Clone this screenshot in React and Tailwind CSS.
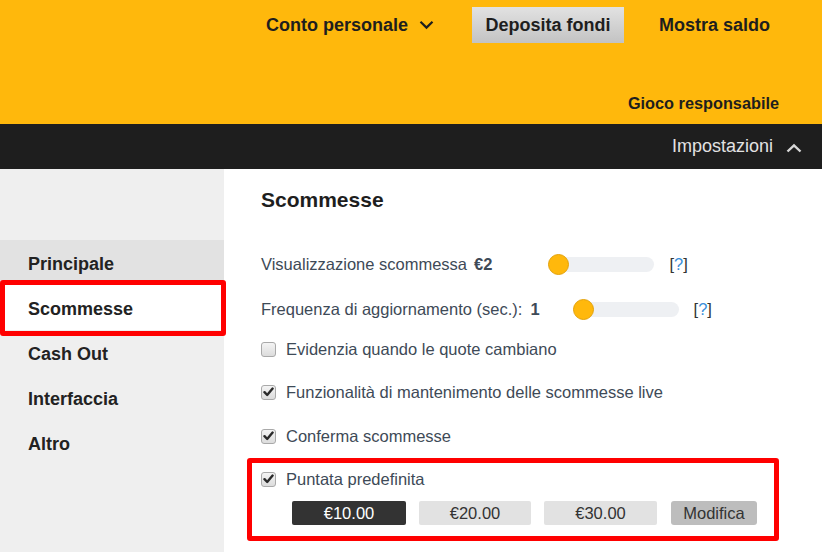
import React from "react";

const Check = ({ checked }) => (
  <span className="w-[15px] h-[15px] rounded-[3px] border border-[#a9a9a9] bg-gradient-to-b from-[#f4f4f4] to-[#dcdcdc] flex items-center justify-center shrink-0">
    {checked && (
      <svg width="11" height="10" viewBox="0 0 11 10">
        <path d="M1.5 5.2 L4.2 8 L9.6 1.6" fill="none" stroke="#2a2a2a" strokeWidth="2.4" strokeLinecap="round" strokeLinejoin="round" />
      </svg>
    )}
  </span>
);

const Slider = () => (
  <div className="relative w-[105px] h-[15px] rounded-full bg-[#eef0f3]">
    <span className="absolute left-[-1px] top-[-3px] w-[21px] h-[21px] rounded-full bg-[#ffb80c] border border-[#e3a20a]" />
  </div>
);

const Help = () => (
  <span className="text-[16.5px] text-[#333]">
    [<span className="text-[#3b8fd9]">?</span>]
  </span>
);

const CheckRow = ({ checked, label, className }) => (
  <div className={"flex items-center h-[22px] " + (className || "")}>
    <Check checked={checked} />
    <span className="ml-[10px] text-[16.5px] text-[#3e4a57]">{label}</span>
  </div>
);

const navItems = ["Principale", "Scommesse", "Cash Out", "Interfaccia", "Altro"];

export default function App() {
  return (
    <div className="w-[822px] h-[552px] overflow-hidden bg-white font-['Liberation_Sans',Arial,sans-serif]">
      {/* top yellow header */}
      <div className="h-[124px] bg-[#ffb80c] flex flex-col">
        <div className="flex items-center pl-[266px] pt-[7px] h-[43px]">
          <span className="text-[18px] font-bold text-[#1e1e1e]">Conto personale</span>
          <svg className="ml-[11px]" width="15" height="10" viewBox="0 0 15 10">
            <path d="M1.5 1.8 L7.5 7.6 L13.5 1.8" fill="none" stroke="#1e1e1e" strokeWidth="2.2" />
          </svg>
          <button className="ml-[38px] w-[152px] h-[36px] bg-gradient-to-b from-[#e2e2e2] to-[#c3c3c3] text-[18px] font-bold text-[#1e1e1e]">
            Deposita fondi
          </button>
          <span className="ml-[35px] text-[18px] font-bold text-[#1e1e1e]">Mostra saldo</span>
        </div>
        <div className="flex-1 flex items-end justify-end pr-[43px] pb-[9px]">
          <span className="text-[16.3px] font-bold text-[#1e1e1e]">Gioco responsabile</span>
        </div>
      </div>

      {/* dark settings bar */}
      <div className="h-[45px] bg-[#1e1e1e] flex items-center justify-end pr-[20px]">
        <span className="text-[18px] text-[#e2e2e2]">Impostazioni</span>
        <svg className="ml-[13px] mt-[3px]" width="16" height="10" viewBox="0 0 16 10">
          <path d="M1.5 8.5 L8 2.3 L14.5 8.5" fill="none" stroke="#d8d8d8" strokeWidth="2.4" />
        </svg>
      </div>

      <div className="flex h-[383px]">
        {/* sidebar */}
        <div className="w-[224px] bg-[#efefef] pt-[71px] shrink-0">
          {navItems.map((item) => (
            <div
              key={item}
              className={
                "relative h-[45px] flex items-center pl-[28px] pt-[3px] text-[18px] font-bold text-[#222] " +
                (item === "Principale" ? "bg-[#e2e2e2]" : item === "Scommesse" ? "bg-white" : "")
              }
            >
              {item}
              {item === "Scommesse" && (
                <span className="absolute left-0 top-[-5px] w-[226px] h-[56px] border-[5px] border-[#ff0000] rounded-[3px]" />
              )}
            </div>
          ))}
        </div>

        {/* content */}
        <div className="flex-1 pl-[37px] pt-[19px]">
          <h2 className="text-[21px] font-bold text-[#1e1e1e] leading-[24px]">Scommesse</h2>

          <div className="flex items-center h-[22px] mt-[41px]">
            <span className="text-[16.5px] text-[#3e4a57]">Visualizzazione scommessa</span>
            <span className="ml-[7px] text-[16.5px] font-bold text-[#3e4a57]">€2</span>
            <div className="ml-[57px]">
              <Slider />
            </div>
            <span className="ml-[15px]">
              <Help />
            </span>
          </div>

          <div className="flex items-center h-[22px] mt-[23px]">
            <span className="text-[16.5px] text-[#3e4a57]">Frequenza di aggiornamento (sec.):</span>
            <span className="ml-[8px] text-[16.5px] font-bold text-[#3e4a57]">1</span>
            <div className="ml-[34px]">
              <Slider />
            </div>
            <span className="ml-[15px]">
              <Help />
            </span>
          </div>

          <CheckRow className="mt-[18px]" label="Evidenzia quando le quote cambiano" />
          <CheckRow checked className="mt-[21px]" label="Funzionalità di mantenimento delle scommesse live" />
          <CheckRow checked className="mt-[22px]" label="Conferma scommesse" />

          <div className="relative mt-[21px] w-[517px]">
            <CheckRow checked label="Puntata predefinita" />
            <div className="flex items-center gap-[13px] ml-[31px] mt-[11px]">
              <button className="w-[114px] h-[24px] rounded-[2px] bg-[#333] text-white text-[16.5px]">€10.00</button>
              <button className="w-[112px] h-[24px] rounded-[2px] bg-[#e2e2e2] text-[#333] text-[16.5px]">€20.00</button>
              <button className="w-[113px] h-[24px] rounded-[2px] bg-[#e2e2e2] text-[#333] text-[16.5px]">€30.00</button>
              <button className="w-[86px] h-[24px] rounded-[3px] bg-[#bdbdbd] text-[#333] text-[16.5px] ml-[1px]">Modifica</button>
            </div>
            <span className="absolute left-[-14px] top-[-10px] w-[532px] h-[83px] border-[5px] border-[#ff0000] rounded-[3px]" />
          </div>
        </div>
      </div>
    </div>
  );
}
